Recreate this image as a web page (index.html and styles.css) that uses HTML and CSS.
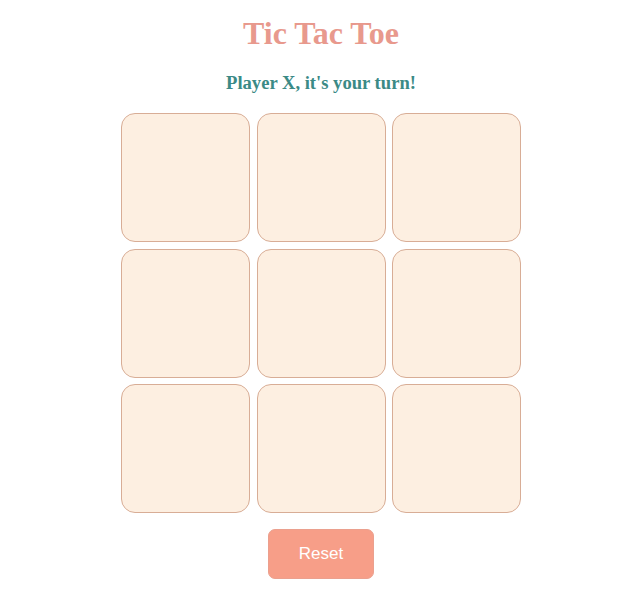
FILE: index.html
```html
<!DOCTYPE html>
<html>
<head>
<meta charset="utf-8">
<link rel="stylesheet" href="styles.css">
</head>
<body>
<main class="game">
  <h1 class="title">Tic Tac Toe</h1>
  <h2 class="status">Player X, it's your turn!</h2>
  <div class="board">
    <div class="cell"></div>
    <div class="cell"></div>
    <div class="cell"></div>
    <div class="cell"></div>
    <div class="cell"></div>
    <div class="cell"></div>
    <div class="cell"></div>
    <div class="cell"></div>
    <div class="cell"></div>
  </div>
  <button class="reset">Reset</button>
</main>
</body>
</html>
```
FILE: styles.css
```css
html, body {
  margin: 0;
  padding: 0;
  background: #ffffff;
}
body {
  font-family: "Liberation Serif", "Times New Roman", serif;
}
.game {
  display: flex;
  flex-direction: column;
  align-items: center;
  padding: 14px 0 0 6px;
}
.title {
  margin: 0;
  font-size: 32px;
  line-height: 38px;
  font-weight: bold;
  color: #e8998d;
}
.status {
  margin: 19px 0 0 0;
  font-size: 18.6px;
  line-height: 24px;
  font-weight: bold;
  color: #3b8a86;
}
.board {
  margin-top: 18px;
  display: grid;
  grid-template-columns: repeat(3, 129px);
  grid-template-rows: repeat(3, 129px);
  gap: 6.5px;
}
.cell {
  box-sizing: border-box;
  background: #fdefe1;
  border: 1px solid #d8ad96;
  border-radius: 14px;
}
.reset {
  margin-top: 16px;
  width: 106px;
  height: 50px;
  background: #f79e88;
  border: 1px solid #eba08e;
  border-radius: 7px;
  color: #ffffff;
  font-family: "Liberation Sans", Arial, sans-serif;
  font-size: 17px;
  cursor: pointer;
}
```
